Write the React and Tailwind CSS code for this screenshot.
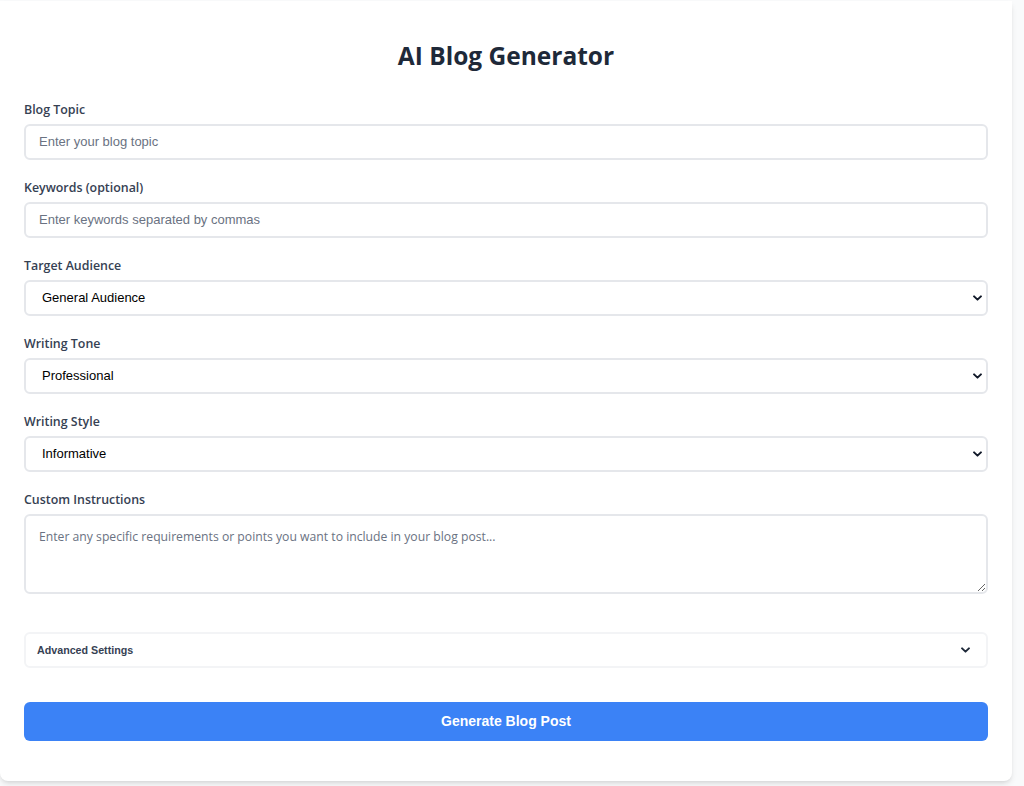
const labelCls = 'mb-1 block text-[12.4px] font-semibold leading-5 text-gray-700';
const fieldCls =
  'block h-9 w-full rounded-md border-2 border-gray-200 bg-white px-[13px] pb-px text-[13px] text-gray-900 placeholder-gray-500 outline-none';

function Chevron({ className = '' }) {
  return (
    <svg viewBox="0 0 10 6" className={className} fill="none" stroke="currentColor" strokeWidth="2.2" strokeLinecap="round" strokeLinejoin="round">
      <path d="M1.2 1.2 5 4.8 8.8 1.2" />
    </svg>
  );
}

function TextField({ label, placeholder }) {
  return (
    <div className="mb-[18px]">
      <label className={labelCls}>{label}</label>
      <input type="text" placeholder={placeholder} className={fieldCls} style={{ fontFamily: '"Liberation Sans", Arial, sans-serif' }} />
    </div>
  );
}

function SelectField({ label, value, options }) {
  return (
    <div className="mb-[18px]">
      <label className={labelCls}>{label}</label>
      <div className="relative">
        <select
          defaultValue={value}
          className="block h-9 w-full appearance-none rounded-md border-2 border-gray-200 bg-white pb-px pl-4 pr-8 text-[13px] text-black outline-none"
          style={{ fontFamily: '"Liberation Sans", Arial, sans-serif' }}
        >
          {options.map((o) => (
            <option key={o}>{o}</option>
          ))}
        </select>
        <Chevron className="pointer-events-none absolute right-[6px] top-1/2 h-[6px] w-[9px] -translate-y-1/2 text-gray-900" />
      </div>
    </div>
  );
}

export default function App() {
  return (
    <div className="min-h-[786px] bg-gray-50 pt-px" style={{ fontFamily: '"Open Sans", "Noto Sans", sans-serif' }}>
      <div className="w-[1012px] rounded-b-lg bg-white px-6 pb-10 pt-[39px] shadow-md">
        <h1 className="mb-7 text-center text-[24.5px] font-bold leading-8 text-gray-800">AI Blog Generator</h1>

        <TextField label="Blog Topic" placeholder="Enter your blog topic" />
        <TextField label="Keywords (optional)" placeholder="Enter keywords separated by commas" />
        <SelectField
          label="Target Audience"
          value="General Audience"
          options={['General Audience', 'Beginners', 'Professionals', 'Students']}
        />
        <SelectField
          label="Writing Tone"
          value="Professional"
          options={['Professional', 'Casual', 'Friendly', 'Formal']}
        />
        <SelectField
          label="Writing Style"
          value="Informative"
          options={['Informative', 'Persuasive', 'Narrative', 'Descriptive']}
        />

        <div>
          <label className={labelCls}>Custom Instructions</label>
          <textarea
            rows={3}
            placeholder="Enter any specific requirements or points you want to include in your blog post..."
            className="block h-20 w-full rounded-md border-2 border-gray-200 bg-white px-[13px] pb-2 pt-[11px] text-[12.2px] leading-5 text-gray-900 placeholder-gray-500 outline-none"
          />
        </div>

        <div className="mt-[38px] flex h-9 items-center justify-between rounded-md border-2 border-gray-100 bg-white pl-[11px] pr-4">
          <span className="text-[10.7px] font-bold text-gray-700" style={{ fontFamily: '"Liberation Sans", Arial, sans-serif' }}>
            Advanced Settings
          </span>
          <Chevron className="h-[6px] w-[9px] text-gray-800" />
        </div>

        <button
          type="button"
          className="mt-[34px] block h-[39px] w-full rounded-md bg-[#3b82f6] text-[14px] font-bold text-white"
          style={{ fontFamily: '"Liberation Sans", Arial, sans-serif' }}
        >
          Generate Blog Post
        </button>
      </div>
    </div>
  );
}
